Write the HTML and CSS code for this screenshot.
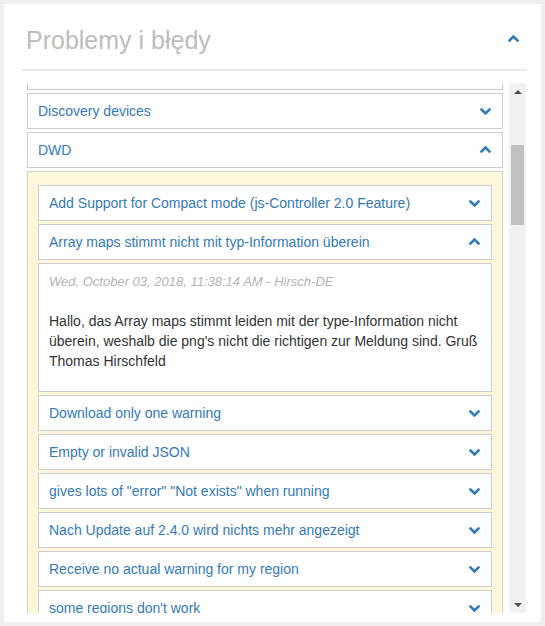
FILE: index.html
```html
<!DOCTYPE html>
<html lang="pl">
<head>
<meta charset="utf-8">
<title>Problemy i błędy</title>
<link rel="stylesheet" href="styles.css">
</head>
<body>
<div class="card">
  <div class="card-head">
    <h2 class="title">Problemy i błędy</h2>
    <svg class="chev chev-head" viewBox="0 0 13 8" width="13" height="8"><path d="M1.6 6.4 L6.5 1.6 L11.4 6.4"/></svg>
  </div>
  <div class="scroll">
    <div class="list">
      <div class="item item-cut"></div>
      <div class="item"><span>Discovery devices</span><svg class="chev" viewBox="0 0 13 8" width="13" height="8"><path d="M1.6 1.6 L6.5 6.4 L11.4 1.6"/></svg></div>
      <div class="item"><span>DWD</span><svg class="chev" viewBox="0 0 13 8" width="13" height="8"><path d="M1.6 6.4 L6.5 1.6 L11.4 6.4"/></svg></div>
      <div class="panel">
        <div class="item"><span>Add Support for Compact mode (js-Controller 2.0 Feature)</span><svg class="chev" viewBox="0 0 13 8" width="13" height="8"><path d="M1.6 1.6 L6.5 6.4 L11.4 1.6"/></svg></div>
        <div class="item"><span>Array maps stimmt nicht mit typ-Information überein</span><svg class="chev" viewBox="0 0 13 8" width="13" height="8"><path d="M1.6 6.4 L6.5 1.6 L11.4 6.4"/></svg></div>
        <div class="issue">
          <div class="issue-date">Wed, October 03, 2018, 11:38:14 AM - Hirsch-DE</div>
          <p class="issue-text">Hallo, das Array maps stimmt leiden mit der type-Information nicht überein, weshalb die png's nicht die richtigen zur Meldung sind. Gruß Thomas Hirschfeld</p>
        </div>
        <div class="item"><span>Download only one warning</span><svg class="chev" viewBox="0 0 13 8" width="13" height="8"><path d="M1.6 1.6 L6.5 6.4 L11.4 1.6"/></svg></div>
        <div class="item"><span>Empty or invalid JSON</span><svg class="chev" viewBox="0 0 13 8" width="13" height="8"><path d="M1.6 1.6 L6.5 6.4 L11.4 1.6"/></svg></div>
        <div class="item"><span>gives lots of "error" "Not exists" when running</span><svg class="chev" viewBox="0 0 13 8" width="13" height="8"><path d="M1.6 1.6 L6.5 6.4 L11.4 1.6"/></svg></div>
        <div class="item"><span>Nach Update auf 2.4.0 wird nichts mehr angezeigt</span><svg class="chev" viewBox="0 0 13 8" width="13" height="8"><path d="M1.6 1.6 L6.5 6.4 L11.4 1.6"/></svg></div>
        <div class="item"><span>Receive no actual warning for my region</span><svg class="chev" viewBox="0 0 13 8" width="13" height="8"><path d="M1.6 1.6 L6.5 6.4 L11.4 1.6"/></svg></div>
        <div class="item"><span>some regions don't work</span><svg class="chev" viewBox="0 0 13 8" width="13" height="8"><path d="M1.6 1.6 L6.5 6.4 L11.4 1.6"/></svg></div>
      </div>
    </div>
    <div class="scrollbar">
      <div class="sb-btn"><span class="tri tri-up"></span></div>
      <div class="sb-track"><div class="sb-thumb"></div></div>
      <div class="sb-btn"><span class="tri tri-down"></span></div>
    </div>
  </div>
</div>
</body>
</html>
```

FILE: styles.css
```css
html, body {
  margin: 0;
  padding: 0;
  background: #efefef;
}

body {
  font-family: "Liberation Sans", Arial, sans-serif;
  font-size: 14px;
  color: #333333;
}

.card {
  margin: 4px;
  width: 537px;
  box-sizing: border-box;
  background: #ffffff;
  padding: 21px 15px 9px 18px;
}

.card-head {
  display: flex;
  align-items: center;
  justify-content: space-between;
  padding: 0 6px 14px 4px;
  border-bottom: 2px solid #e5eaef;
}

.title {
  margin: 0;
  font-size: 25px;
  line-height: 30px;
  font-weight: normal;
  color: #bdbdbd;
}

.chev {
  display: block;
  flex: none;
}

.chev path {
  fill: none;
  stroke: #337ab7;
  stroke-width: 2.7;
  stroke-linecap: butt;
  stroke-linejoin: miter;
}

.chev-head {
  margin-top: -3px;
}

.scroll {
  margin-top: 12px;
  height: 530px;
  display: flex;
  overflow: hidden;
}

.list {
  flex: 1;
  padding: 0 6px 0 5px;
  overflow: hidden;
}

.item {
  height: 36px;
  box-sizing: border-box;
  margin-top: 3px;
  padding: 0 10px;
  display: flex;
  align-items: center;
  justify-content: space-between;
  background: #ffffff;
  border: 1px solid #cccccc;
  color: #337ab7;
  font-size: 14px;
  white-space: nowrap;
}

.item-cut {
  margin-top: -29px;
}

.panel {
  margin-top: 3px;
  padding: 10px 10px 10px;
  background: #fff7dc;
  border: 1px solid #d9d2bd;
}

.issue {
  margin-top: 3px;
  height: 129px;
  box-sizing: border-box;
  padding: 10px 6px 20px 10px;
  background: #ffffff;
  border: 1px solid #cccccc;
}

.issue-date {
  font-size: 13px;
  line-height: 16px;
  font-style: italic;
  color: #b3b3b3;
}

.issue-text {
  margin: 21px 0 0;
  font-size: 14px;
  line-height: 20px;
  color: #333333;
}

.scrollbar {
  width: 17px;
  flex: none;
  display: flex;
  flex-direction: column;
  background: #f1f1f1;
}

.sb-btn {
  height: 17px;
  flex: none;
  display: flex;
  align-items: center;
  justify-content: center;
}

.tri {
  width: 0;
  height: 0;
  border-left: 4px solid transparent;
  border-right: 4px solid transparent;
}

.tri-up {
  border-bottom: 4px solid #505050;
}

.tri-down {
  border-top: 4px solid #505050;
}

.sb-track {
  flex: 1;
}

.sb-thumb {
  margin: 45px 2px 0;
  height: 80px;
  background: #c1c1c1;
}
```
